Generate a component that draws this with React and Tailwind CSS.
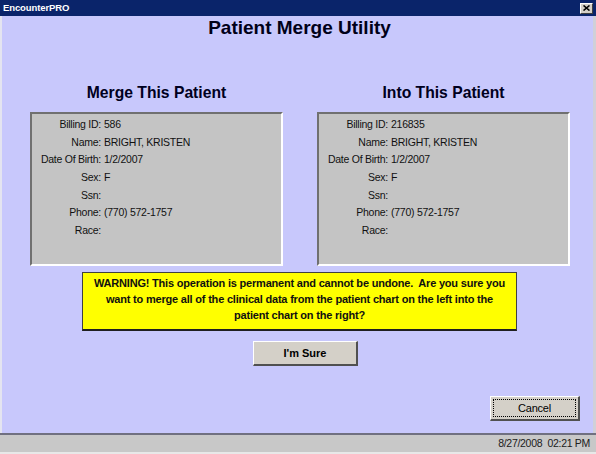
import React from "react";

const rowsLeft = [
  ["Billing ID:", "586"],
  ["Name:", "BRIGHT, KRISTEN"],
  ["Date Of Birth:", "1/2/2007"],
  ["Sex:", "F"],
  ["Ssn:", ""],
  ["Phone:", "(770) 572-1757"],
  ["Race:", ""],
];
const rowsRight = [
  ["Billing ID:", "216835"],
  ["Name:", "BRIGHT, KRISTEN"],
  ["Date Of Birth:", "1/2/2007"],
  ["Sex:", "F"],
  ["Ssn:", ""],
  ["Phone:", "(770) 572-1757"],
  ["Race:", ""],
];

function PatientPanel({ heading, rows }) {
  return (
    <div className="w-[253px] flex flex-col">
      <div className="h-[18px] text-center text-[15.7px] leading-[18px] font-bold text-[#000020]">
        {heading}
      </div>
      <div className="mt-[10px] h-[154px] bg-[#c4c4c4] border-t-2 border-l-2 border-t-[#707070] border-l-[#707070] border-b-2 border-r-2 border-b-white border-r-white pt-[2px]">
        {rows.map(([k, v]) => (
          <div key={k} className="flex h-[17.7px] items-center text-[10.5px] tracking-[-0.25px] text-[#111]">
            <div className="w-[69px] text-right shrink-0">{k}</div>
            <div className="ml-[3px]">{v}</div>
          </div>
        ))}
      </div>
    </div>
  );
}

export default function App() {
  return (
    <div className="w-[596px] h-[454px] bg-[#c8c8fc] flex flex-col overflow-hidden font-['Liberation_Sans',Arial,sans-serif] text-black">
      <div className="h-[16px] bg-[#0a246a] flex items-center justify-between pl-[3px] pr-[3px] shrink-0">
        <span className="text-white font-bold text-[9.5px] tracking-[-0.1px]">
          EncounterPRO
        </span>
        <div className="w-[13px] h-[11px] bg-[#d4d0c8] border border-t-white border-l-white border-b-[#404040] border-r-[#404040] flex items-center justify-center">
          <svg width="7" height="6" viewBox="0 0 7 6">
            <path d="M0.5 0.5 L6.5 5.5 M6.5 0.5 L0.5 5.5" stroke="#000" strokeWidth="1.6" />
          </svg>
        </div>
      </div>
      <div className="flex-1 flex flex-col border-l-2 border-l-[#e4e4f0] border-r-[3px] border-r-[#d0d0d8]">
        <div className="mt-[1px] h-[22px] text-center text-[19px] leading-[22px] font-bold text-[#000018] pl-[4px]">
          Patient Merge Utility
        </div>
        <div className="mt-[45px] flex gap-[34px] pl-[28px]">
          <PatientPanel heading="Merge This Patient" rows={rowsLeft} />
          <PatientPanel heading="Into This Patient" rows={rowsRight} />
        </div>
        <div className="mt-[6px] ml-[80px] w-[435px] h-[59px] bg-[#ffff00] border border-[#404040] border-b-2 border-b-[#202020] pt-[2px] px-[7px] text-center text-[11px] leading-[16px] font-bold tracking-[-0.2px] text-[#101010]">
          WARNING! This operation is permanent and cannot be undone.&nbsp; Are you sure you want to merge all of the clinical data from the patient chart on the left into the patient chart on the right?
        </div>
        <div className="mt-[10px] ml-[251px] w-[105px] h-[25px] bg-[#d4d0c8] border border-t-white border-l-white border-b-2 border-r-2 border-b-[#505050] border-r-[#505050] flex items-center justify-center text-[11px] font-bold">
          I'm Sure
        </div>
        <div className="mt-[30px] ml-[488px] w-[90px] h-[25px] bg-[#d4d0c8] border border-t-white border-l-white border-b-2 border-r-2 border-b-[#505050] border-r-[#505050] p-[2px]">
          <div className="w-full h-full border border-dotted border-black flex items-center justify-center text-[11px] tracking-[-0.2px]">
            Cancel
          </div>
        </div>
      </div>
      <div className="h-[21px] shrink-0 border-t-2 border-t-[#707080] bg-[#c8c8c8] border-b-2 border-b-[#e8e8e8] flex items-center justify-end pr-[6px] text-[10.5px] tracking-[-0.3px] text-[#202020]">
        8/27/2008&nbsp; 02:21 PM
      </div>
    </div>
  );
}
